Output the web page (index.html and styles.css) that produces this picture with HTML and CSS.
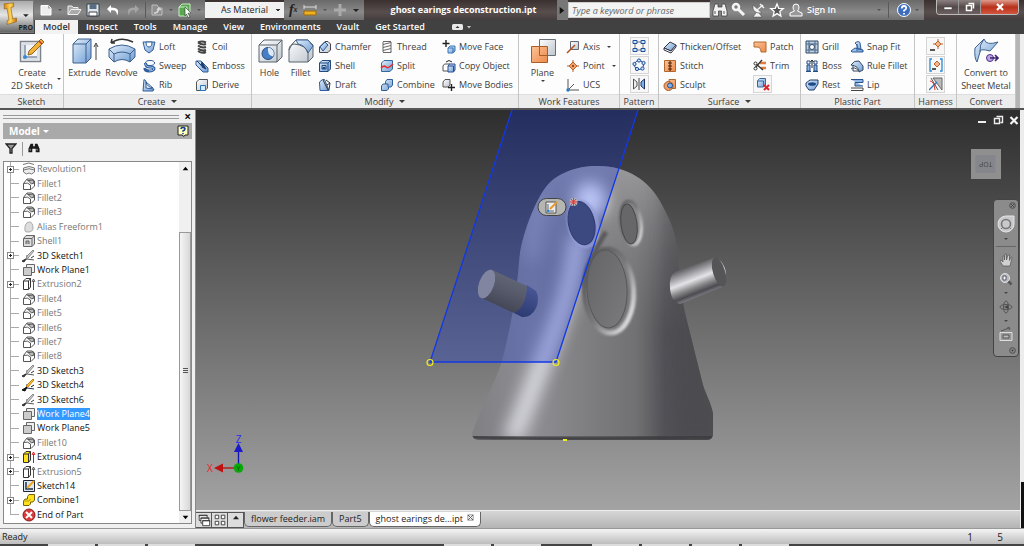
FILE: index.html
```html
<!DOCTYPE html>
<html lang="en">
<head>
<meta charset="utf-8">
<title>ghost earings deconstruction.ipt</title>
<link rel="stylesheet" href="styles.css">
</head>
<body>
<svg class="defs" width="0" height="0" aria-hidden="true">
  <symbol id="t-fillet" viewBox="0 0 14 14"><path d="M1.500 6.500 5 2h5l2.500 2v5L9 12.500H1.500z" fill="#fff" stroke="#555"/><path d="M1.500 6.500Q6 5 8.500 8v4.500M5 3q4 0 6 4" fill="none" stroke="#555"/><path d="M6 3.500 11.500 3 12 6 9.500 7z" fill="#bbb" stroke="#555"/></symbol>
  <symbol id="t-rev" viewBox="0 0 14 14"><path d="M1.500 6Q7 3 12.500 6v4l-3 2Q7 10 4.500 12l-3-2z" fill="#eee" stroke="#777"/><path d="M1.500 8q5.500-2.500 11 0M1 2.500Q7-.5 12 2.500" fill="none" stroke="#777"/></symbol>
  <symbol id="t-free" viewBox="0 0 14 14"><path d="M3 11Q2 3 7 2q4 0 4 6 0 4-5 4Q3 12 3 11z" fill="#ddd" stroke="#aaa"/></symbol>
  <symbol id="t-shell" viewBox="0 0 14 14"><path d="M1.500 4.500 4 1.500h8.500V10L10 12.500H1.500zM1.500 4.500H10v8M10 4.500l2.500-3" fill="#ddd" stroke="#666"/><path d="M4 10V7h3v3" fill="#aaa" stroke="#666"/></symbol>
  <symbol id="t-sk3" viewBox="0 0 14 14"><path d="M5 6v4l-4 2M5 10l7 1" fill="none" stroke="#555"/><path d="M12 2 6 9l-2 1 1-3 6-6z" fill="#ccc" stroke="#888"/><path d="m0 12 4-2-2 3zM9 9l3-2" fill="#333" stroke="#333"/></symbol>
  <symbol id="t-sk4" viewBox="0 0 14 14"><path d="M5 6v4l-4 2M5 10l7 1" fill="none" stroke="#235"/><path d="M12 2 6 9l-2 1 1-3 6-6z" fill="#f8c52c" stroke="#c47d12"/><path d="m0 12 5-3-2 4zM9 9l3-2" fill="#111" stroke="#111"/></symbol>
  <symbol id="t-plane" viewBox="0 0 14 14"><path d="M4.500 1.500h8v8h-8z" fill="#eee" stroke="#666"/><path d="M1.500 4.500h8v8h-8z" fill="#ccc" stroke="#666"/></symbol>
  <symbol id="t-ext" viewBox="0 0 14 14"><path d="M1.500 4 4 1.500h4.500V10L6.500 12.500h-5zM1.500 4h5v8.500M6.500 4l2-2.500" fill="#fff" stroke="#333"/><path d="M11.500 13V4m-1.500 1 1.500-3L13 5" fill="none" stroke="#555"/></symbol>
  <symbol id="t-exty" viewBox="0 0 14 14"><path d="M1.500 4 4 1.500h4.500V10L6.500 12.500h-5zM1.500 4h5v8.500M6.500 4l2-2.500" fill="#ffe11c" stroke="#333"/><path d="M11.500 13V4m-1.500 1 1.500-3L13 5" fill="none" stroke="#e01010"/></symbol>
  <symbol id="t-sk2" viewBox="0 0 14 14"><path d="M1.500 1.500h11v11h-11z" fill="#dde7f2" stroke="#223"/><path d="M4 3v7h7" fill="none" stroke="#234" stroke-width="1.500"/><path d="m5 9 7-7" stroke="#eda41c" stroke-width="2"/></symbol>
  <symbol id="t-comb" viewBox="0 0 14 14"><path d="M5.500 3.500 7 1.500h5.500V7L11 9H8.500v2L7 12.500H1.500V8L3 6h2.500z" fill="#ffe11c" stroke="#77610a"/><path d="M1.500 8H7l1.500-2" fill="none" stroke="#b89a10"/></symbol>
  <symbol id="t-end" viewBox="0 0 14 14"><circle cx="7" cy="7" r="6" fill="#d93a3a" stroke="#8c1c1c"/><path d="m4 4 6 6m0-6-6 6" stroke="#fff" stroke-width="2"/></symbol>
  <linearGradient id="blue" x1="0" y1="0" x2="1" y2="1"><stop offset="0" stop-color="#e3effb"/><stop offset="1" stop-color="#6d9cd3"/></linearGradient>
  <linearGradient id="orange" x1="0" y1="0" x2="1" y2="1"><stop offset="0" stop-color="#fbc398"/><stop offset="1" stop-color="#ee8a49"/></linearGradient>
  <linearGradient id="grey" x1="0" y1="0" x2="1" y2="1"><stop offset="0" stop-color="#fff"/><stop offset="1" stop-color="#bcc4cc"/></linearGradient>
</svg>
<div class="app">
<header class="top">
  <button class="appbtn" aria-label="Application menu"><svg viewBox="0 0 33 33"><defs><linearGradient id="gold" x1="0" x2="1"><stop offset="0" stop-color="#d98410"/><stop offset=".5" stop-color="#ffd65a"/><stop offset="1" stop-color="#c8740a"/></linearGradient></defs><path d="M4 3 14 2v4l-3 1 2 12 4-1v4L7 25v-4l2-1L7 8l-3 .5z" fill="url(#gold)" stroke="#8e5607" stroke-width=".6"/><path d="M24 14h6l-3 3z" fill="#222"/></svg><span>PRO</span></button>
  <div class="bars">
    <div class="title">
      <div class="qat">
        <button aria-label="New"><svg viewBox="0 0 16 16"><path d="M3 3.500h7.500L13 6v7H3z" fill="#eee" stroke="#fff"/><path d="M10 3v3.500h3" fill="#aaa"/></svg></button><i class="dd dim"></i>
        <button aria-label="Open"><svg viewBox="0 0 16 16"><path d="M2 12.500V4h4l1 1.500h5V7M2 12.500 5 7.500h10l-3 5z" fill="#aaa" stroke="#eee"/></svg></button>
        <button aria-label="Save"><svg viewBox="0 0 16 16"><path d="M2 2h12v12H2z" fill="#dfe5ec" stroke="#344"/><path d="M4.500 2h7v5h-7z" fill="#5a6e83"/><path d="M4 10h8v4H4z" fill="#fff" stroke="#445"/></svg></button>
        <button aria-label="Undo"><svg viewBox="0 0 16 16"><path d="M6 3 2 7l4 4V8.500q6-1 6 5 4-8-6-8z" fill="#fff"/></svg></button>
        <button aria-label="Redo"><svg viewBox="0 0 16 16"><path d="m10 3 4 4-4 4V8.500q-6-1-6 5-4-8 6-8z" fill="#a5a5a5"/></svg></button>
        <i class="sep"></i>
        <button aria-label="Update"><svg viewBox="0 0 16 16"><path d="M2 3h5l2 3h3v7H2z" fill="#8f8f8f" stroke="#bdbdbd"/><path d="M4 11q4 0 5-4m-2 1 2-2 2 2" fill="none" stroke="#d5d5d5" stroke-width="1.500"/></svg></button><i class="dd dim"></i>
        <button aria-label="Select"><svg viewBox="0 0 16 16"><path d="M2 5 5 2h8v9l-3 3H2z" fill="#59a74e" stroke="#c8eec2"/><path d="M2 5h8v9" fill="none" stroke="#d7f3d3"/><path d="m8 5 6 6-3 .3L13 15l-2 .5-1.500-3.500L8 14z" fill="#fff" stroke="#333" stroke-width=".6"/></svg></button><i class="dd dim"></i>
      </div>
      <select class="material" aria-label="Appearance"><option>As Material</option></select>
      <div class="qat2">
        <button aria-label="Parameters" class="fx">f<sub>x</sub></button>
        <button aria-label="Measure"><svg viewBox="0 0 16 16"><path d="M2 9h12v4H2z" fill="#f0b024" stroke="#9b6a08"/><path d="M2 5h12M2 3v4m12-4v4" stroke="#ddd" fill="none"/></svg></button><i class="dd dim"></i>
        <button aria-label="Add"><svg viewBox="0 0 16 16"><path d="M8 2v12M2 8h12" stroke="#aaa" stroke-width="3"/></svg></button><i class="dd more"></i>
      </div>
      <h1>ghost earings deconstruction.ipt</h1>
      <button class="expand" aria-label="Collapse search"><svg viewBox="0 0 10 10"><path d="m3 1 5 4-5 4z" fill="#111"/></svg></button>
      <input class="search" type="text" placeholder="Type a keyword or phrase" aria-label="Search help">
      <div class="info">
        <button aria-label="Search"><svg viewBox="0 0 16 16"><path d="M3 2h3v3h4V2h3l2 7v5H9.500V9h-3v5H1V9z" fill="#f2f2f2" stroke="#333" stroke-width=".7"/><path d="M3 9v3m9-3v3" stroke="#555"/></svg></button>
        <button aria-label="Subscription"><svg viewBox="0 0 16 16"><circle cx="5" cy="5" r="3" fill="none" stroke="#f4f4f4" stroke-width="2.500"/><path d="m7 7 6 6" stroke="#f4f4f4" stroke-width="3"/></svg></button>
        <button aria-label="Communication"><svg viewBox="0 0 16 16"><path d="M3 3q-1 9 9 8zM6 11l-3 4h9l-3-4" fill="#f2f2f2" stroke="#444" stroke-width=".5"/><path d="m7 8 6-5M10 2l4 4" stroke="#f2f2f2" stroke-width="1.500"/></svg></button>
        <button aria-label="Favorites"><svg viewBox="0 0 16 16"><path d="m8 2 1.700 4.300 4.600.3-3.500 3 1.100 4.400L8 11.600 4.100 14l1.100-4.400-3.500-3 4.600-.3z" fill="#555" stroke="#fff" stroke-width="1.300"/></svg></button>
        <button class="signin"><svg viewBox="0 0 16 16"><path d="M8 2q3 0 3 3 0 3-1.500 4L14 11v3H2v-3l4.500-2Q5 8 5 5q0-3 3-3z" fill="#999" stroke="#fff"/></svg>Sign In</button>
        <i class="dd dim"></i><i class="sep"></i>
        <button aria-label="Help"><svg viewBox="0 0 16 16"><circle cx="8" cy="8" r="6.500" fill="#3b6cc0" stroke="#fff"/><path d="M5.800 6.500q0-2.500 2.200-2.500t2.200 2q0 1.500-2.200 2.500v1M8 11v1.500" stroke="#fff" stroke-width="1.800" fill="none"/></svg></button><i class="dd dim"></i>
      </div>
      <div class="win">
        <button aria-label="Minimize"><svg viewBox="0 0 16 12"><path d="M4 6h8v2.500H4z" fill="#fff" stroke="#444" stroke-width=".6"/></svg></button>
        <button aria-label="Restore"><svg viewBox="0 0 16 12"><path d="M6.500 2.500h5v5M4.500 4.500h5v5h-5z" fill="none" stroke="#fff" stroke-width="1.500"/></svg></button>
        <button class="close" aria-label="Close"><svg viewBox="0 0 16 12"><path d="m5 3 6 6m0-6L5 9" stroke="#fff" stroke-width="2.200"/></svg></button>
      </div>
    </div>
    <nav class="tabs">
      <a href="#" class="on">Model</a><a href="#">Inspect</a><a href="#">Tools</a><a href="#">Manage</a><a href="#">View</a><a href="#">Environments</a><a href="#">Vault</a><a href="#">Get Started</a>
      <button aria-label="Minimize ribbon"><svg viewBox="0 0 22 10"><rect x="1" y="2" width="11" height="6" rx="1.500" fill="#e8e8e8"/><path d="m4.500 6 2-2 2 2z" fill="#333"/><path d="M16 4h4l-2 2.500z" fill="#ccc"/></svg></button>
    </nav>
  </div>
</header>

<section class="ribbon">
  <div class="panel"><div class="body">
    <button class="big"><svg viewBox="0 0 28 28"><path d="M2.500 4.500h20v20h-20z" fill="#f2f4f6" stroke="#7b838c" stroke-width="1.500"/><path d="M5 7h15v15H5z" fill="none" stroke="#c5cbd2"/><path d="M7 8v12h12" fill="none" stroke="#445c78"/><circle cx="7" cy="20" r="2" fill="#3b87d0"/><path d="m10 18 1-4L23 2l3 3-12 12z" fill="#f3b33b" stroke="#8d6523"/><path d="m21 4 3 3" stroke="#c33" stroke-width="1.500"/></svg><span>Create<br>2D Sketch</span><i class="dd side"></i></button>
  </div><h2>Sketch</h2></div>

  <div class="panel"><div class="body">
    <button class="big w37"><svg viewBox="0 0 28 28"><path d="M2 7 7 2h13v19l-5 5H2z" fill="url(#blue)" stroke="#3c5f8e"/><path d="M2 7h13v19M15 7l5-5" fill="none" stroke="#3c5f8e"/><path d="M25 23V8m-2 2 2-4 2 4" fill="none" stroke="#444"/></svg><span>Extrude</span></button>
    <button class="big w37"><svg viewBox="0 0 28 28"><path d="M1 12q13-8 26 0v8l-5 5q-8-5-16 0l-5-5z" fill="url(#blue)" stroke="#3c5f8e"/><path d="m1 12 5 5q8-4 16 0l5-5M6 17v8m16-8v8" fill="none" stroke="#3c5f8e"/><path d="M3 6Q13-1 25 5M3 6l1-4M3 6h4" fill="none" stroke="#333" stroke-width="1.500"/></svg><span>Revolve</span></button>
    <div class="col c52">
      <button><svg viewBox="0 0 14 14"><path d="M1 2h12l-2 8-4 3-4-3z" fill="url(#blue)" stroke="#2f5c9a"/><path d="M4 2q0 5 3 5t3-5z" fill="#fff" stroke="#2f5c9a"/></svg>Loft</button>
      <button><svg viewBox="0 0 14 14"><ellipse cx="8" cy="4" rx="4.500" ry="2.500" fill="#fff" stroke="#2f5c9a"/><path d="M3.500 4q0 4 4.500 4t4 2-5 2-4-3" fill="none" stroke="#2f5c9a" stroke-width="3"/><path d="M3.500 4.500q0 3.500 4.500 3.500t4 2-5 2" fill="none" stroke="#9fc2ea"/></svg>Sweep</button>
      <button><svg viewBox="0 0 14 14"><path d="M2 1.500 4 3v7l8 1-1 2H1z" fill="url(#blue)" stroke="#2f5c9a"/><path d="M4 4q1 5 7 6z" fill="#fff" stroke="#2f5c9a"/></svg>Rib</button>
    </div>
    <div class="col">
      <button><svg viewBox="0 0 14 14"><path d="M3 2.500q4-2 8 0M3 2.500q4 3 8 1.500M3 5.500q4 3 8 1.500M3 8.500q4 3 8 1.500M3 11q4 3 8 1" fill="none" stroke="#444" stroke-width="2"/></svg>Coil</button>
      <button><svg viewBox="0 0 14 14"><path d="M1 2h5l7 7v4H8L1 6z" fill="url(#blue)" stroke="#2f5c9a"/><path d="m2 2 4 4 1-3 4 7-4-2" fill="#1f3f70" stroke="#1f3f70"/></svg>Emboss</button>
      <button><svg viewBox="0 0 14 14"><path d="M1.500 4 4 1.500h8.500V10L10 12.500H1.500z" fill="url(#grey)" stroke="#555"/><path d="M5.500 7.500h5v5h-5z" fill="#d7e8fa" stroke="#2374bd"/></svg>Derive</button>
    </div>
  </div><h2>Create<i class="dd"></i></h2></div>

  <div class="panel"><div class="body">
    <button class="big w31"><svg viewBox="0 0 28 28"><path d="M3 8 8 3h18v17l-5 5H3z" fill="url(#grey)" stroke="#59626c"/><path d="M3 8h18v17M21 8l5-5" fill="none" stroke="#59626c"/><circle cx="12" cy="16.500" r="6" fill="#467fc6" stroke="#274b80"/><path d="M12 10.500a6 6 0 0 1 5 9q-6-1-5-9z" fill="#dceaf9"/></svg><span>Hole</span></button>
    <button class="big w31"><svg viewBox="0 0 28 28"><path d="M2 13Q4 7 9 3h12l5 5v12l-5 5H2z" fill="url(#grey)" stroke="#59626c"/><path d="m9 3 12 0 5 6-5 7Q18 8 11 7z" fill="url(#blue)" stroke="#3c6597"/><path d="M2 13q0-5 5-6 12 1 14 9v9" fill="none" stroke="#59626c"/></svg><span>Fillet</span></button>
    <div class="col c62">
      <button><svg viewBox="0 0 14 14"><path d="M1.500 7 7 1.500h3L12.500 4v6L10 12.500H1.500z" fill="url(#grey)" stroke="#445"/><path d="m2 7 5-5 3 3-5 6z" fill="url(#blue)" stroke="#2f5c9a"/></svg>Chamfer</button>
      <button><svg viewBox="0 0 14 14"><path d="M1.500 4 4 1.500h8.500V10L10 12.500H1.500z" fill="url(#blue)" stroke="#234b80"/><path d="M1.500 4H10v8.500M10 4l2.500-2.500M4 10V6.500h4V10z" fill="none" stroke="#234b80"/><path d="M5 8h2v2H4z" fill="#1f4b88"/></svg>Shell</button>
      <button><svg viewBox="0 0 14 14"><path d="m1.500 4 3-2.500h2L11 12.500H2z" fill="url(#blue)" stroke="#2f5c9a"/><path d="m5 2 5 10M8 2l4 3-3 2m3-2-1 7" fill="none" stroke="#333"/></svg>Draft</button>
    </div>
    <div class="col c62">
      <button><svg viewBox="0 0 14 14"><path d="M3 1.500h8M3 4.500l8-2M3 7.500l8-2M3 10.500l8-2M3 12.500h8l0-1M3 2v10m8-10v10" fill="none" stroke="#666"/></svg>Thread</button>
      <button><svg viewBox="0 0 14 14"><path d="M1.500 4 4 1.500h8.500V10L10 12.500H1.500z" fill="url(#blue)" stroke="#34689f"/><path d="M1 9q3-3 5-1t7-3" fill="none" stroke="#e32e2e" stroke-width="1.600"/></svg>Split</button>
      <button><svg viewBox="0 0 14 14"><path d="M5.500 3.500 7 1.500h5.500V7L11 9H8.500v2L7 12.500H1.500V8L3 6h2.500z" fill="url(#blue)" stroke="#2f5c9a"/><path d="M5.500 6H8v3" fill="none" stroke="#2f5c9a"/></svg>Combine</button>
    </div>
    <div class="col">
      <button><svg viewBox="0 0 14 14"><path d="M4 0v7M.5 3.500h7" stroke="#222" stroke-width="1.400"/><path d="m6 8 2-2h5v5l-2 2H6zM6 8h5v5" fill="url(#blue)" stroke="#3675b7"/></svg>Move Face</button>
      <button><svg viewBox="0 0 14 14"><path d="m1 7 1.500-2H8v5l-1 2H1z" fill="#fff" stroke="#555"/><path d="m6 7 1.500-2H13v6l-1.500 2H6zM6 7h5.500v6" fill="url(#blue)" stroke="#284f93"/><path d="M4 3q3-3 6 0" fill="none" stroke="#222"/></svg>Copy Object</button>
      <button><svg viewBox="0 0 14 14"><path d="m1 4 2-2.500h5V7L6 9H1z" fill="url(#grey)" stroke="#555"/><path d="M9.500 6v7M6 9.500h7" stroke="#222" stroke-width="1.400"/></svg>Move Bodies</button>
    </div>
  </div><h2>Modify<i class="dd"></i></h2></div>

  <div class="panel"><div class="body">
    <button class="big w45"><svg viewBox="0 0 28 28"><path d="M10.500 2.500h16v16h-16z" fill="url(#grey)" stroke="#66707b"/><path d="M2.500 9.500h16v16h-16z" fill="url(#orange)" stroke="#a85c27"/><path d="M10.500 9.500v9h8" fill="none" stroke="#a85c27"/></svg><span>Plane</span><i class="dd"></i></button>
    <div class="col">
      <button><svg viewBox="0 0 14 14"><path d="M4.500 1.500h8v8h-8z" fill="url(#grey)" stroke="#667"/><path d="m1 13 8-8" stroke="#b85020" stroke-width="1.600"/></svg>Axis<i class="dd"></i></button>
      <button><svg viewBox="0 0 14 14"><path d="M7 1v12M1 7h12" stroke="#b8642e"/><path d="m7 3 4 4-4 4-4-4z" fill="#f3a06a" stroke="#b8642e"/><circle cx="7" cy="7" r="1" fill="#7b3310"/></svg>Point<i class="dd"></i></button>
      <button><svg viewBox="0 0 14 14"><path d="M2 1v11h11M2 12l6-6" fill="none" stroke="#555"/><circle cx="2" cy="12" r="1.700" fill="#2a7ac2"/></svg>UCS</button>
    </div>
  </div><h2>Work Features</h2></div>

  <div class="panel"><div class="body mid"><div class="col boxed">
    <button aria-label="Rectangular pattern"><svg viewBox="0 0 14 14"><path d="M3 3h8v8H3z" fill="none" stroke="#777"/><path d="M1 1.500h4v3H1zm8 0h4v3H9zm-8 8h4v3H1zm8 0h4v3H9z" fill="#cfe3fa" stroke="#1f4f9c"/></svg></button>
    <button aria-label="Circular pattern"><svg viewBox="0 0 14 14"><circle cx="7" cy="7" r="4.500" fill="none" stroke="#1f4f9c"/><g fill="#cfe3fa" stroke="#1f4f9c"><circle cx="7" cy="2.500" r="1.600"/><circle cx="11.500" cy="5" r="1.600"/><circle cx="10.500" cy="10.500" r="1.600"/><circle cx="5" cy="11" r="1.600"/><circle cx="2.500" cy="6" r="1.600"/></g></svg></button>
    <button aria-label="Mirror"><svg viewBox="0 0 14 14"><path d="M1.500 2 5 5v4l-3.500 3z" fill="#eee" stroke="#555"/><path d="M12.500 2 9 5v4l3.500 3z" fill="#79b4e8" stroke="#236"/><path d="M7 1v12" stroke="#444"/></svg></button>
  </div></div><h2>Pattern</h2></div>

  <div class="panel"><div class="body">
    <div class="col c90">
      <button><svg viewBox="0 0 14 14"><path d="m1 8 6-6 6 3-5 6z" fill="url(#blue)" stroke="#334"/><path d="m1 8 7 3 5-6v2l-5 6-7-3z" fill="#fff" stroke="#334"/></svg>Thicken/Offset</button>
      <button><svg viewBox="0 0 14 14"><path d="M1.500 1.500h11v11h-11z" fill="url(#orange)" stroke="#b0682f"/><path d="M7 2v10M5 4h4M5 7h4M5 10h4" stroke="#542507" stroke-width="1.200"/></svg>Stitch</button>
      <button><svg viewBox="0 0 14 14"><path d="M6 1.500h6.500v9H6z" fill="url(#orange)" stroke="#b0682f"/><circle cx="5.500" cy="8" r="4.500" fill="#f0a066" stroke="#a85c27"/><circle cx="7" cy="7.500" r="2.500" fill="#7fb1e4" stroke="#254f92"/></svg>Sculpt</button>
    </div>
    <div class="col">
      <button><svg viewBox="0 0 14 14"><path d="M1 2h12v10H8q0-5-4-5H1z" fill="url(#orange)" stroke="#b0682f"/></svg>Patch</button>
      <button><svg viewBox="0 0 14 14"><path d="M7 4h6M8 9h5" stroke="#e37b3b" stroke-width="2.500"/><path d="m2 4 8 7M2 9l7-8" stroke="#333" stroke-width="1.300"/><circle cx="2.500" cy="9.500" r="1.500" fill="#fff" stroke="#333"/><circle cx="2.500" cy="4.500" r="1.500" fill="#fff" stroke="#333"/></svg>Trim</button>
      <button class="frame" aria-label="Delete face"><svg viewBox="0 0 14 14"><path d="m1.500 4 2-2.500h6V8l-2 2h-6zM1.500 4h6v6" fill="url(#blue)" stroke="#34689f"/><path d="m8 8 5 5m0-5-5 5" stroke="#d9262b" stroke-width="2"/></svg></button>
    </div>
  </div><h2>Surface<i class="dd"></i></h2></div>

  <div class="panel"><div class="body">
    <div class="col c45">
      <button><svg viewBox="0 0 14 14"><path d="M1 1h12v12H1z" fill="#b8cfe6" stroke="#334a66"/><path d="M4 1v12M10 1v12M1 4h12M1 10h12" stroke="#4c6785"/><circle cx="7" cy="7" r="2.500" fill="#fff" stroke="#334a66"/></svg>Grill</button>
      <button><svg viewBox="0 0 14 14"><path d="M2 6h3v6H2zm7 0h3v6H9zM1 12.500h5m2 0h5" fill="#8bb4e0" stroke="#244d85"/><path d="M2 2h3v3H2zm7 0h3v3H9z" fill="#fff" stroke="#244d85"/><path d="M7 1v8M5.500 3 7 1l1.500 2" fill="none" stroke="#222"/></svg>Boss</button>
      <button><svg viewBox="0 0 14 14"><path d="m1 5 4-3h8v4L9 12H4L1 8z" fill="url(#blue)" stroke="#1e3d6b"/><ellipse cx="7" cy="6" rx="4" ry="1.800" fill="#1e4a86"/></svg>Rest</button>
    </div>
    <div class="col">
      <button><svg viewBox="0 0 14 14"><path d="M5 3q4-3 5 0l1 6H8L7 5zM1 11l4-3 8 2v2H2z" fill="url(#blue)" stroke="#2f5c9a"/><path d="M7 4v7" stroke="#2f5c9a"/></svg>Snap Fit</button>
      <button><svg viewBox="0 0 14 14"><path d="M1 6q3-5 8-4l4 5v4l-4 2q0-6-8-7z" fill="url(#blue)" stroke="#34475e"/><path d="M3 7v5h5M1 10q3-3 8 2" fill="none" stroke="#34475e"/></svg>Rule Fillet</button>
      <button><svg viewBox="0 0 14 14"><path d="M1 1.500h12v3H5V8h8" fill="#8fb7e5" stroke="#2b528b"/><path d="M1 12.500h12V10H1" fill="#fff" stroke="#444"/></svg>Lip</button>
    </div>
  </div><h2>Plastic Part</h2></div>

  <div class="panel"><div class="body mid"><div class="col boxed">
    <button aria-label="Place pin"><svg viewBox="0 0 14 14"><path d="M9 0v10M4 5h10" stroke="#b8642e"/><path d="m9 2 3 3-3 3-3-3z" fill="#f7b58a" stroke="#b8642e"/><path d="M1 11h5" stroke="#222" stroke-width="1.500"/></svg></button>
    <button aria-label="Pin group"><svg viewBox="0 0 14 14"><path d="M3 1H1v12h2M11 1h2v12h-2" fill="none" stroke="#2a8ad8" stroke-width="1.300"/><path d="m8 3 3 3-3 3-3-3z" fill="#f7b58a" stroke="#b8642e"/><path d="M3 11h4" stroke="#222" stroke-width="1.500"/></svg></button>
    <button aria-label="Properties"><svg viewBox="0 0 14 14"><path d="M4 1h9v12z" fill="#bbb" stroke="#666"/><path d="m0 13 8-8" stroke="#2a7ac2" stroke-width="1.500"/><path d="M1 4q4 0 5 9" fill="none" stroke="#d33"/><path d="m2 1 7 12" stroke="#555"/></svg></button>
  </div></div><h2>Harness</h2></div>

  <div class="panel"><div class="body mid">
    <button class="big"><svg viewBox="0 0 28 28"><path d="M3 11 12 2q2 7 14 3l-8 9Q7 11 8 15l-3 10q-3-4-2-14z" fill="url(#blue)" stroke="#3e628d"/><path d="M12 2Q7 8 8 15" fill="none" stroke="#3e628d"/><circle cx="18" cy="21" r="3.500" fill="#b9a7e2" stroke="#4b2f90"/><path d="M18 21h8m-3-3 3 3-3 3" fill="none" stroke="#3c246f" stroke-width="1.600"/></svg><span>Convert to<br>Sheet Metal</span></button>
  </div><h2>Convert</h2></div>
  <div class="ribend"></div>
</section>

<main class="work">
  <aside class="browser">
    <div class="grip"><i></i><button aria-label="Close browser">×</button></div>
    <div class="bhead"><button>Model<i class="dd"></i></button><button class="q" aria-label="Help"><svg viewBox="0 0 12 12"><path d="M1 1h10v9H8L7 11.500 5 10H1z" fill="#ffffb8" stroke="#222"/><path d="M4 4q0-1.500 2-1.500T8 4q0 1-2 2v.8M6 8v1.200" fill="none" stroke="#123a9c" stroke-width="1.500"/></svg></button></div>
    <div class="btools"><button aria-label="Filter"><svg viewBox="0 0 12 12"><path d="M1 2h10L7 6.500V11H5V6.500z" fill="#999" stroke="#222" stroke-width="1.300"/></svg></button><i></i><button aria-label="Find"><svg viewBox="0 0 14 12"><path d="M3 1h3v3h2V1h3l2.500 6v4H9V7H5v4H.5V7z" fill="#1a1a1a"/><path d="M2.500 7v2m8-2v2" stroke="#ccc"/></svg></button></div>
    <div class="treebox">
      <ul class="tree">
        <li class="off"><button class="plus" aria-label="Expand"></button><svg><use href="#t-rev"/></svg><span>Revolution1</span></li>
        <li class="off"><svg><use href="#t-fillet"/></svg><span>Fillet1</span></li>
        <li class="off"><svg><use href="#t-fillet"/></svg><span>Fillet2</span></li>
        <li class="off"><svg><use href="#t-fillet"/></svg><span>Fillet3</span></li>
        <li class="off"><svg><use href="#t-free"/></svg><span>Alias Freeform1</span></li>
        <li class="off"><svg><use href="#t-shell"/></svg><span>Shell1</span></li>
        <li><button class="plus" aria-label="Expand"></button><svg><use href="#t-sk3"/></svg><span>3D Sketch1</span></li>
        <li><svg><use href="#t-plane"/></svg><span>Work Plane1</span></li>
        <li class="off"><button class="plus" aria-label="Expand"></button><svg><use href="#t-ext"/></svg><span>Extrusion2</span></li>
        <li class="off"><svg><use href="#t-fillet"/></svg><span>Fillet4</span></li>
        <li class="off"><svg><use href="#t-fillet"/></svg><span>Fillet5</span></li>
        <li class="off"><svg><use href="#t-fillet"/></svg><span>Fillet6</span></li>
        <li class="off"><svg><use href="#t-fillet"/></svg><span>Fillet7</span></li>
        <li class="off"><svg><use href="#t-fillet"/></svg><span>Fillet8</span></li>
        <li><svg><use href="#t-sk3"/></svg><span>3D Sketch3</span></li>
        <li><svg><use href="#t-sk4"/></svg><span>3D Sketch4</span></li>
        <li><svg><use href="#t-sk3"/></svg><span>3D Sketch6</span></li>
        <li class="sel"><svg><use href="#t-plane"/></svg><span>Work Plane4</span></li>
        <li><svg><use href="#t-plane"/></svg><span>Work Plane5</span></li>
        <li class="off"><svg><use href="#t-fillet"/></svg><span>Fillet10</span></li>
        <li><button class="plus" aria-label="Expand"></button><svg><use href="#t-exty"/></svg><span>Extrusion4</span></li>
        <li class="off"><button class="plus" aria-label="Expand"></button><svg><use href="#t-ext"/></svg><span>Extrusion5</span></li>
        <li><svg><use href="#t-sk2"/></svg><span>Sketch14</span></li>
        <li><button class="plus" aria-label="Expand"></button><svg><use href="#t-comb"/></svg><span>Combine1</span></li>
        <li><svg><use href="#t-end"/></svg><span>End of Part</span></li>
      </ul>
      <div class="scroll"><button aria-label="Scroll up"><svg viewBox="0 0 8 8"><path d="m1.500 5.500 2.500-3 2.500 3z"/></svg></button><div class="track"></div><div class="thumb"><i></i></div><button aria-label="Scroll down"><svg viewBox="0 0 8 8"><path d="m1.500 2.500 2.500 3 2.500-3z"/></svg></button></div>
    </div>
  </aside>

  <section class="stage">
    <div class="view">
      <svg class="scene" viewBox="196 110 824 400" preserveAspectRatio="xMidYMid slice">
        <defs>
          <linearGradient id="body" gradientUnits="userSpaceOnUse" x1="472" y1="0" x2="713" y2="0"><stop offset="0" stop-color="#808084"/><stop offset=".25" stop-color="#8f8f93"/><stop offset=".5" stop-color="#7d7d80"/><stop offset=".68" stop-color="#717173"/><stop offset=".8" stop-color="#525257"/><stop offset="1" stop-color="#515156"/></linearGradient>
          <linearGradient id="headtop" x1="0" y1="0" x2="0" y2="1"><stop offset="0" stop-color="#a0a0a3" stop-opacity=".9"/><stop offset=".35" stop-color="#8a8a8c" stop-opacity=".35"/><stop offset=".6" stop-color="#808080" stop-opacity="0"/></linearGradient>
          <linearGradient id="armR" gradientUnits="userSpaceOnUse" x1="690" y1="267" x2="702" y2="298"><stop offset="0" stop-color="#66666a"/><stop offset=".4" stop-color="#e4e4e8"/><stop offset=".62" stop-color="#88888b"/><stop offset=".8" stop-color="#4c4c50"/><stop offset="1" stop-color="#9696a4"/></linearGradient>
          <linearGradient id="armL" gradientUnits="userSpaceOnUse" x1="513" y1="275" x2="500" y2="308"><stop offset="0" stop-color="#636878"/><stop offset=".5" stop-color="#55596a"/><stop offset="1" stop-color="#434654"/></linearGradient>
          <linearGradient id="armB" gradientUnits="userSpaceOnUse" x1="533" y1="284" x2="522" y2="317"><stop offset="0" stop-color="#4b5b9a"/><stop offset="1" stop-color="#2d3a72"/></linearGradient>
          <linearGradient id="rim" x1="0" y1="0" x2="1" y2="1"><stop offset="0" stop-color="#4f4f52"/><stop offset=".5" stop-color="#77777a"/><stop offset="1" stop-color="#fff"/></linearGradient>
          <linearGradient id="mouth" x1="0" y1="0" x2="1" y2="1"><stop offset="0" stop-color="#646467"/><stop offset="1" stop-color="#7b7b7d"/></linearGradient>
          <filter id="b2" x="-50%" y="-50%" width="200%" height="200%"><feGaussianBlur stdDeviation="1"/></filter>
          <filter id="b8" x="-100%" y="-50%" width="300%" height="200%"><feGaussianBlur stdDeviation="8"/></filter>
          <clipPath id="ghostclip"><path d="M596 166C573 166 554 176 546 187C536 200 521 235 519 262C517 290 512 322 502 361C495 384 479 411 472 434Q472 439 478 440L708 440Q713 439 713 434V413C710 400 706 395 703 385L687 321C681 298 680 277 678 255C676 235 671 221 662 205C650 180 625 165 596 166Z"/></clipPath>
        </defs>
        <g clip-path="url(#ghostclip)">
          <path fill="url(#body)" d="M465 160h255v285H465z"/>
          <path fill="url(#headtop)" d="M465 160h255v285H465z"/>
          <path d="M662 180q5 80 12 260h45V180z" fill="#46464b" opacity=".5" filter="url(#b8)"/>
          <path d="M578 235q-4 40-16 75T512 440" fill="none" stroke="#f2f2fa" stroke-width="17" opacity=".8" filter="url(#b8)"/>
          <path d="M606 232q-14 20-22 55" fill="none" stroke="#3f3f43" stroke-width="5" opacity=".6" filter="url(#b2)"/>
          <path d="M545 195q-14 35-12 65" fill="none" stroke="#c4c4cc" stroke-width="18" opacity=".35" filter="url(#b8)"/>
          <ellipse cx="590" cy="200" rx="16" ry="18" fill="#fff" filter="url(#b8)"/>
          <path d="M600 185v60" stroke="#fff" stroke-width="13" opacity=".75" filter="url(#b8)"/>
          <path d="M472 437q60 3 241 0" fill="none" stroke="#3d3d41" stroke-width="4" filter="url(#b2)"/>
          <path d="M652 439h60" stroke="#9292a8" stroke-width="3" filter="url(#b2)"/>
        </g>
        <ellipse cx="609" cy="291" rx="24.500" ry="42" fill="none" stroke="url(#rim)" stroke-width="5" transform="rotate(-3 609 291)" filter="url(#b2)"/>
        <ellipse cx="607" cy="289" rx="20" ry="39" fill="url(#mouth)" stroke="#58585b" transform="rotate(-3 606 289)"/>
        <ellipse cx="631" cy="223" rx="10" ry="22" fill="none" stroke="url(#rim)" stroke-width="3" transform="rotate(-7 631 223)" filter="url(#b2)"/>
        <ellipse cx="629" cy="224" rx="8" ry="20" fill="#676769" stroke="#48484b" transform="rotate(-7 629 224)"/>
        <ellipse cx="583" cy="224" rx="14" ry="23" fill="none" stroke="#c8c8d4" stroke-width="3" transform="rotate(-12 583 224)" filter="url(#b2)"/>
        <ellipse cx="581.500" cy="223" rx="13" ry="22" fill="#50535c" stroke="#3b3e47" transform="rotate(-12 582 223)"/>
        <path d="M675 272 713 258Q722 257 726 272 727 283 722 287L680 304Q671 302 670 288 669 276 675 272z" fill="url(#armR)"/>
        <ellipse cx="719" cy="272" rx="6" ry="15" transform="rotate(-17 719 272)" fill="#555558"/>
        <path d="M512 110H638L556 362H430z" fill="#0a30de" fill-opacity=".28"/>
        <path d="m527 285 9 6q4 8 0 17-5 10-14 9l-8-4z" fill="url(#armB)"/>
        <path d="m490 269 37 17q-1 22-13 27l-30-14z" fill="url(#armL)"/>
        <ellipse cx="486.500" cy="284" rx="7.500" ry="15" transform="rotate(20 486.500 284)" fill="#82859f"/>
        <path d="M512 110 430 362H556L638 110" fill="none" stroke="#1238e8" stroke-width="1.300"/>
        <g fill="none" stroke="#f2ee18" stroke-width="1.200"><circle cx="430" cy="362.500" r="3"/><circle cx="556" cy="362.500" r="3"/></g>
        <path d="M563 439h4v2h-4z" fill="#f2ee18"/>
        <circle cx="573.500" cy="202" r="4" fill="#b7b7bd"/><path d="m571 199 5 6m0-6-5 6m2.500-7v8m-4-4h8" stroke="#e33a36"/>
        <rect x="538" y="198.500" width="28" height="17" rx="8.500" fill="#b5b5b1" stroke="#444"/>
        <path d="M546 202h10v11h-10z" fill="#eee" stroke="#555"/><path d="M548 204v7h6" fill="none" stroke="#567"/><path d="m550 209 7-7" stroke="#e5982b" stroke-width="2"/><circle cx="548" cy="211" r="1.300" fill="#2c86d3"/>
        <path d="M238.500 467V450" stroke="#1414b4" stroke-width="1.400"/><path d="m238.500 443-4.500 9h9z" fill="#1a1ac8"/><path d="M238 468h-18" stroke="#b01818" stroke-width="1.400"/><path d="m214 468 9-4.500v9z" fill="#c01010"/><circle cx="238.500" cy="468" r="4.800" fill="#0aa80a"/>
        <g class="axis" text-anchor="middle"><text x="238.500" y="443" fill="#2a2af0">Z</text><text x="210" y="472" fill="#f02020">X</text><text x="238.500" y="471" class="y" fill="#064d06">Y</text></g>
      </svg>
      <div class="mdi"><button aria-label="Minimize document"><svg viewBox="0 0 12 12"><path d="M2 7h8v2H2z" fill="#eee"/></svg></button><button aria-label="Restore document"><svg viewBox="0 0 12 12"><path d="M4.500 2.500h6v6h-2M2.500 4.500h5v5h-5z" fill="none" stroke="#eee" stroke-width="1.400"/></svg></button><button aria-label="Close document"><svg viewBox="0 0 12 12"><path d="m2.500 3 7 7m0-7-7 7" stroke="#f4f4f4" stroke-width="2.200"/></svg></button></div>
      <button class="cube"><span>TOP</span></button>
      <div class="navbar">
        <button class="tiny r" aria-label="Close navigation bar"><svg viewBox="0 0 8 8"><circle cx="4" cy="4" r="3.200" fill="none" stroke="#444"/><path d="m2.500 2.500 3 3m0-3-3 3" stroke="#333"/></svg></button>
        <button aria-label="Steering wheel"><svg class="lg" viewBox="0 0 18 18"><path d="M9 1h8v8a8 8 0 1 1-8-8z" fill="#c9c9cb" stroke="#e4e4e4"/><circle cx="9" cy="9" r="4.500" fill="none" stroke="#77777a" stroke-width="1.600"/><path d="m4 14 2-2m6 0 2 2" stroke="#77777a"/></svg></button><i class="dd"></i><hr>
        <button aria-label="Pan"><svg viewBox="0 0 14 14"><path d="M4 13 1 8l1-1 2 2V3h1.500v4L6 1h1.500v6L9 2h1.500v5.500L12 4l1 .5L11 13z" fill="#d0d0d0" stroke="#555" stroke-width=".7"/></svg></button>
        <button aria-label="Zoom"><svg viewBox="0 0 14 14"><path d="m8 8 4.500 4.500" stroke="#555" stroke-width="2.500"/><circle cx="6" cy="6" r="4.500" fill="#b5bbbf" stroke="#e0e0e0"/><path d="M4 4h3v4H4z" fill="#fff" stroke="#556"/></svg></button><i class="dd"></i>
        <button aria-label="Orbit"><svg viewBox="0 0 14 14"><ellipse cx="7" cy="7" rx="2.500" ry="6" fill="none" stroke="#555"/><ellipse cx="7" cy="7" rx="6" ry="2.500" fill="none" stroke="#555"/><path d="m5 7 4-2v4z" fill="#444"/></svg></button><i class="dd"></i>
        <button aria-label="Look at"><svg viewBox="0 0 14 14"><path d="M1 5.500h12v8H1z" fill="#999" stroke="#ddd"/><path d="M4 8h6v3H4z" fill="#bbb" stroke="#555"/><path d="m2 4 8-3M8 0l3 1-1 2" fill="none" stroke="#555"/></svg></button>
        <button class="tiny r" aria-label="Customize"><svg viewBox="0 0 8 8"><circle cx="4" cy="4" r="3.200" fill="none" stroke="#444"/><path d="M2.500 3h3L4 5.500z" fill="#333"/></svg></button>
      </div>
    </div>
    <div class="docs">
      <button aria-label="Cascade"><svg viewBox="0 0 16 16"><path d="M2.500 2.500h9v6h-9z" fill="#fff" stroke="#333"/><path d="M4.500 5.500h9v6h-9z" fill="#fff" stroke="#333"/><path d="M6.500 8.500h8v6h-8z" fill="#fff" stroke="#333"/><path d="M2 3h10M4 6h10M6 9h9" stroke="#333"/></svg></button>
      <button aria-label="Tile"><svg viewBox="0 0 16 16"><path d="M2.500 2.500h4v4h-4zm7 0h4v4h-4zm-7 7h4v4h-4zm7 0h4v4h-4z" fill="#fff" stroke="#333"/></svg></button>
      <button aria-label="List documents"><svg viewBox="0 0 16 16"><path d="m4.500 7 3.500-4 3.500 4z" fill="#222"/></svg></button>
      <a href="#">flower feeder.iam</a><a href="#">Part5</a><a href="#" class="on">ghost earings de...ipt<svg viewBox="0 0 8 8"><path d="M1 1h6v6H1z" fill="none" stroke="#888"/><path d="m1 1 6 6m0-6L1 7" stroke="#555"/></svg></a>
    </div>
  </section>
</main>
<footer class="status"><span>Ready</span><b>1</b><b>5</b></footer>
<div class="taskbar"><i></i><i></i><i></i><i class="far"></i><i></i><i class="next"></i><i></i><i></i><i></i></div>
</div>
</body>
</html>
```
FILE: styles.css
```css
* { box-sizing: border-box; }
body { margin: 0; font-family: "Open Sans", "Noto Sans", sans-serif; font-size: 9px; line-height: 12px; color: #3c3c3c; }
button, input, select { font: inherit; color: inherit; margin: 0; padding: 0; border: 0; background: none; }
button { display: flex; align-items: center; flex: none; }
a { color: inherit; text-decoration: none; }
h1, h2, ul { margin: 0; padding: 0; font: inherit; }
.defs { position: absolute; }
svg { display: block; flex: none; }
.app { height: 100vh; display: flex; flex-direction: column; background: #ececec; overflow: hidden; }
.dd { flex: none; width: 0; height: 0; border: 3px solid transparent; border-top-color: currentColor; border-bottom: 0; }
.dim { opacity: .5; }
.sep { width: 1px; height: 16px; background: #5a5a5a; }

/* title bar and ribbon tabs */
.top { flex: none; display: flex; height: 34px; background: #414141; }
.appbtn { width: 34px; height: 33px; border: 1px solid #777; border-left: 0; background: linear-gradient(#aaa, #e5e5e5 45%, #666); display: grid; }
.appbtn svg, .appbtn span { grid-area: 1 / 1; }
.appbtn svg { width: 32px; height: 31px; }
.appbtn span { align-self: end; justify-self: end; font-size: 7px; line-height: 9px; font-weight: bold; color: #222; }
.bars { flex: 1; min-width: 0; }
.title { display: flex; height: 20px; align-items: center; color: #fff; background: linear-gradient(#3b3030, #594e4e 60%, #453d3d); }
.title button svg { width: 16px; height: 16px; }
.qat, .qat2, .info { display: flex; align-items: center; height: 20px; background: linear-gradient(#696969, #8a8a8a 60%, #6f6f6f); color: #222; }
.qat { width: 171px; justify-content: space-between; padding: 0 4px; }
.qat .dd { border-width: 2px; border-bottom: 0; }
.material { appearance: none; width: 79px; height: 16px; padding: 0 10px 0 16px; color: #222; background: linear-gradient(45deg, transparent 50%, #333 50%) 70px 7px / 3px 3px no-repeat, linear-gradient(135deg, #333 50%, transparent 50%) 73px 7px / 3px 3px no-repeat, #f1f1f1; background-position: 70px 7px, 73px 7px, 0 0; }
.material { background: linear-gradient(225deg, #333 50%, transparent 50%) 70px 7px / 3px 3px no-repeat, linear-gradient(135deg, #333 50%, transparent 50%) 73px 7px / 3px 3px no-repeat, #f1f1f1; }
.qat2 { width: 80px; justify-content: space-evenly; }
.qat2 .dd { border-width: 2px; border-bottom: 0; }
.qat2 .more { border-width: 3px; border-bottom: 0; }
.fx { font: italic bold 14px/14px "Liberation Serif", serif; }
.fx sub { font-size: 8px; }
.title h1 { flex: 1; text-align: center; font-size: 9px; font-weight: 700; color: #fff; padding-left: 6px; white-space: nowrap; }
.expand { width: 11px; height: 20px; background: #777; }
.title .expand svg { width: 9px; height: 9px; }
.search { width: 142px; height: 16px; padding: 0 3px; background: #f3f3f3; border: 1px solid #ccc; color: #333; font-style: italic; }
.search::placeholder { color: #666; opacity: 1; }
.info { width: 214px; padding-left: 2px; gap: 3px; color: #fff; }
.signin { font-weight: 600; gap: 3px; }
.info .dd { border-width: 2px; border-bottom: 0; color: #222; }
.info .signin + .dd { margin-left: 38px; margin-right: 4px; }
.info .sep { margin-right: 4px; }
.win { display: flex; align-self: start; margin: 0 5px 0 12px; height: 15px; border: 1px solid #bbb; border-top: 0; border-radius: 0 0 4px 4px; overflow: hidden; }
.win button { width: 22px; justify-content: center; border-right: 1px solid #999; background: linear-gradient(#8c8080, #554a4a 50%, #6c6060); }
.win .close { width: 37px; border: 0; background: linear-gradient(#dd9c8d, #b8301a 50%, #d4573f); }
.title .win svg { width: 16px; height: 12px; }
.tabs { display: flex; height: 14px; padding-left: 1px; color: #fff; font-weight: 600; line-height: 14px; }
.tabs a { padding: 0 8px; }
.tabs .on { background: #f2f2f2; color: #333; }
.tabs button { margin-left: 18px; }
.tabs button svg { width: 22px; height: 10px; }

/* ribbon */
.ribbon { flex: none; display: grid; grid-template-columns: 64fr 188fr 267fr 101fr 39fr 142fr 114fr 42fr 59fr 8fr; height: 76px; border-bottom: 2px solid #555; background: #fdfdfd; }
.panel { display: flex; flex-direction: column; min-width: 0; border-right: 1px solid #c4c4c4; white-space: nowrap; }
.body { flex: 1; display: flex; padding: 3px 0 0 2px; }
.panel h2 { display: flex; justify-content: center; align-items: center; gap: 6px; height: 14px; background: #ececec; border-top: 1px solid #ddd; }
.mid { padding-left: 0; justify-content: center; }
.big { position: relative; flex-direction: column; width: 60px; gap: 1px; text-align: center; line-height: 13px; }
.big > svg { width: 28px; height: 28px; }
.mid .big { width: 58px; }
.w37 { width: 37px; }
.w31 { width: 31px; }
.w45 { width: 43px; }
.big .dd, .col .dd { border-width: 2px; border-bottom: 0; }
.side { position: absolute; right: 1px; bottom: 14px; }
.col { display: flex; flex-direction: column; padding-left: 2px; }
.c52 { width: 53px; }
.c62 { width: 62px; }
.c90 { width: 90px; }
.c45 { width: 45px; }
.col button { height: 19px; gap: 3px; }
.col svg { width: 14px; height: 14px; }
.col .dd { margin-left: 4px; }
.boxed { padding: 0; }
.boxed button, .col .frame { width: 19px; height: 18px; margin-bottom: 1px; justify-content: center; border: 1px solid #d5d5d5; background: #f7f7f7; }
.ribend { background: #b5b5b5; border-right: 4px solid #eee; }

/* model browser */
.work { flex: 1; min-height: 0; display: flex; background: linear-gradient(#ececec 89%, #111 89%); }
.browser { flex: none; width: 196px; display: flex; flex-direction: column; padding: 2px 3px 4px; border-right: 1px solid #888; background: #f0f0f0; }
.grip { display: flex; align-items: center; height: 10px; gap: 5px; padding-right: 1px; }
.grip i { flex: 1; height: 4px; border: solid #999; border-width: 1px 0; }
.grip button { font-size: 12px; font-weight: bold; line-height: 8px; color: #111; }
.bhead { display: flex; justify-content: space-between; align-items: center; height: 16px; margin-top: 1px; padding: 0 3px 0 6px; background: #a9a9a9; color: #fff; font-weight: bold; font-size: 10px; }
.bhead button { gap: 3px; }
.q svg { width: 12px; height: 12px; }
.btools { display: flex; align-items: flex-start; height: 22px; gap: 5px; padding: 3px 0 0 2px; }
.btools i { width: 1px; height: 14px; background: #999; }
.btools svg { width: 12px; height: 12px; }
.treebox { flex: 1; min-height: 0; display: flex; border: 1px solid #888; background: #fff; }
.tree { flex: 1; list-style: none; display: grid; grid-auto-rows: minmax(0, 1fr); padding-bottom: 1px; color: #111; }
.tree li { position: relative; display: flex; align-items: center; gap: 1px; padding-left: 18px; background: linear-gradient(#aaa, #aaa) 6px 0 / 1px 100% no-repeat, linear-gradient(#aaa, #aaa) 6px 50% / 9px 1px no-repeat; }
.tree li:last-child { background-size: 1px 50%, 9px 1px; }
.tree svg { width: 14px; height: 14px; }
.tree .off { color: #777; }
.tree .sel span { background: #3399ff; color: #fff; }
.plus { position: absolute; left: 3px; top: 4px; width: 7px; height: 7px; border: 1px solid #888; background: linear-gradient(#222, #222) center / 3px 1px no-repeat, linear-gradient(#222, #222) center / 1px 3px no-repeat, #fff; }
.scroll { width: 12px; display: flex; flex-direction: column; background: #f0f0f0; }
.scroll button { height: 12px; justify-content: center; }
.scroll svg { width: 9px; height: 9px; }
.track { flex: 58; }
.thumb { flex: 278; display: flex; align-items: center; justify-content: center; border: 1px solid #999; background: linear-gradient(90deg, #f5f5f5, #d8d8d8); }
.thumb i { width: 5px; height: 6px; background: repeating-linear-gradient(#555 0 1px, transparent 1px 2px); }

/* graphics window */
.stage { flex: 1; min-width: 0; display: flex; flex-direction: column; margin-right: 3px; border-right: 1px solid #eee; background: #c7c7c7; }
.view { position: relative; flex: 1; min-height: 0; background: linear-gradient(#2e2e2e, #686868 50%, #a3a3a3); border-bottom: 1px solid #eee; }
.scene { width: 100%; height: 100%; }
.axis { font-size: 10px; }
.axis .y { font-size: 7px; }
.mdi { position: absolute; top: 4px; right: 0; display: flex; gap: 4px; }
.mdi svg { width: 12px; height: 12px; }
.cube { position: absolute; top: 39px; right: 19px; width: 30px; height: 30px; background: #8f8f8f; justify-content: center; }
.cube span { padding: 3px; background: #85858c; color: #44444e; font-size: 7px; transform: rotate(180deg); }
.navbar { position: absolute; top: 89px; right: 1px; width: 26px; height: 158px; display: flex; flex-direction: column; align-items: center; justify-content: space-between; padding: 2px; border: 1px solid #444; border-radius: 4px; background: #8b8b8b; color: #444; }
.navbar svg { width: 14px; height: 14px; }
.navbar .lg { width: 18px; height: 18px; }
.navbar .tiny svg { width: 7px; height: 7px; }
.r { align-self: flex-end; }
.navbar .dd { border-width: 2px; border-bottom: 0; }
.navbar hr { width: 20px; margin: 0; border: 0; border-top: 1px solid #666; }
.docs { flex: none; display: flex; height: 17px; padding-top: 1px; color: #222; background: linear-gradient(#d6d6d6, #b4b4b4); }
.docs button { width: 16px; justify-content: center; border: 1px solid #555; border-left: 0; background: #ddd; }
.docs button svg { width: 14px; height: 14px; }
.docs a { display: flex; align-items: center; gap: 4px; height: 15px; padding: 0 6px; border: 1px solid #666; border-top: 0; border-radius: 0 0 5px 5px; background: #ccc; }
.docs a.on { background: #fff; }
.docs a svg { width: 7px; height: 7px; margin-bottom: 4px; }

/* status */
.status { flex: none; display: flex; align-items: center; height: 16px; padding: 0 21px 0 2px; border-top: 1px solid #999; background: linear-gradient(#f4f4f4, #bdbdbd); color: #222; }
.status span { flex: 1; }
.status b { width: 30px; text-align: right; font-weight: 400; font-size: 10px; }
.taskbar { flex: none; display: flex; height: 2px; gap: 3px; padding-left: 48px; background: #444; }
.taskbar i { width: 47px; background: #ddd; }
.taskbar .far { margin-left: 246px; }
.taskbar .next { margin-left: 48px; }
```
